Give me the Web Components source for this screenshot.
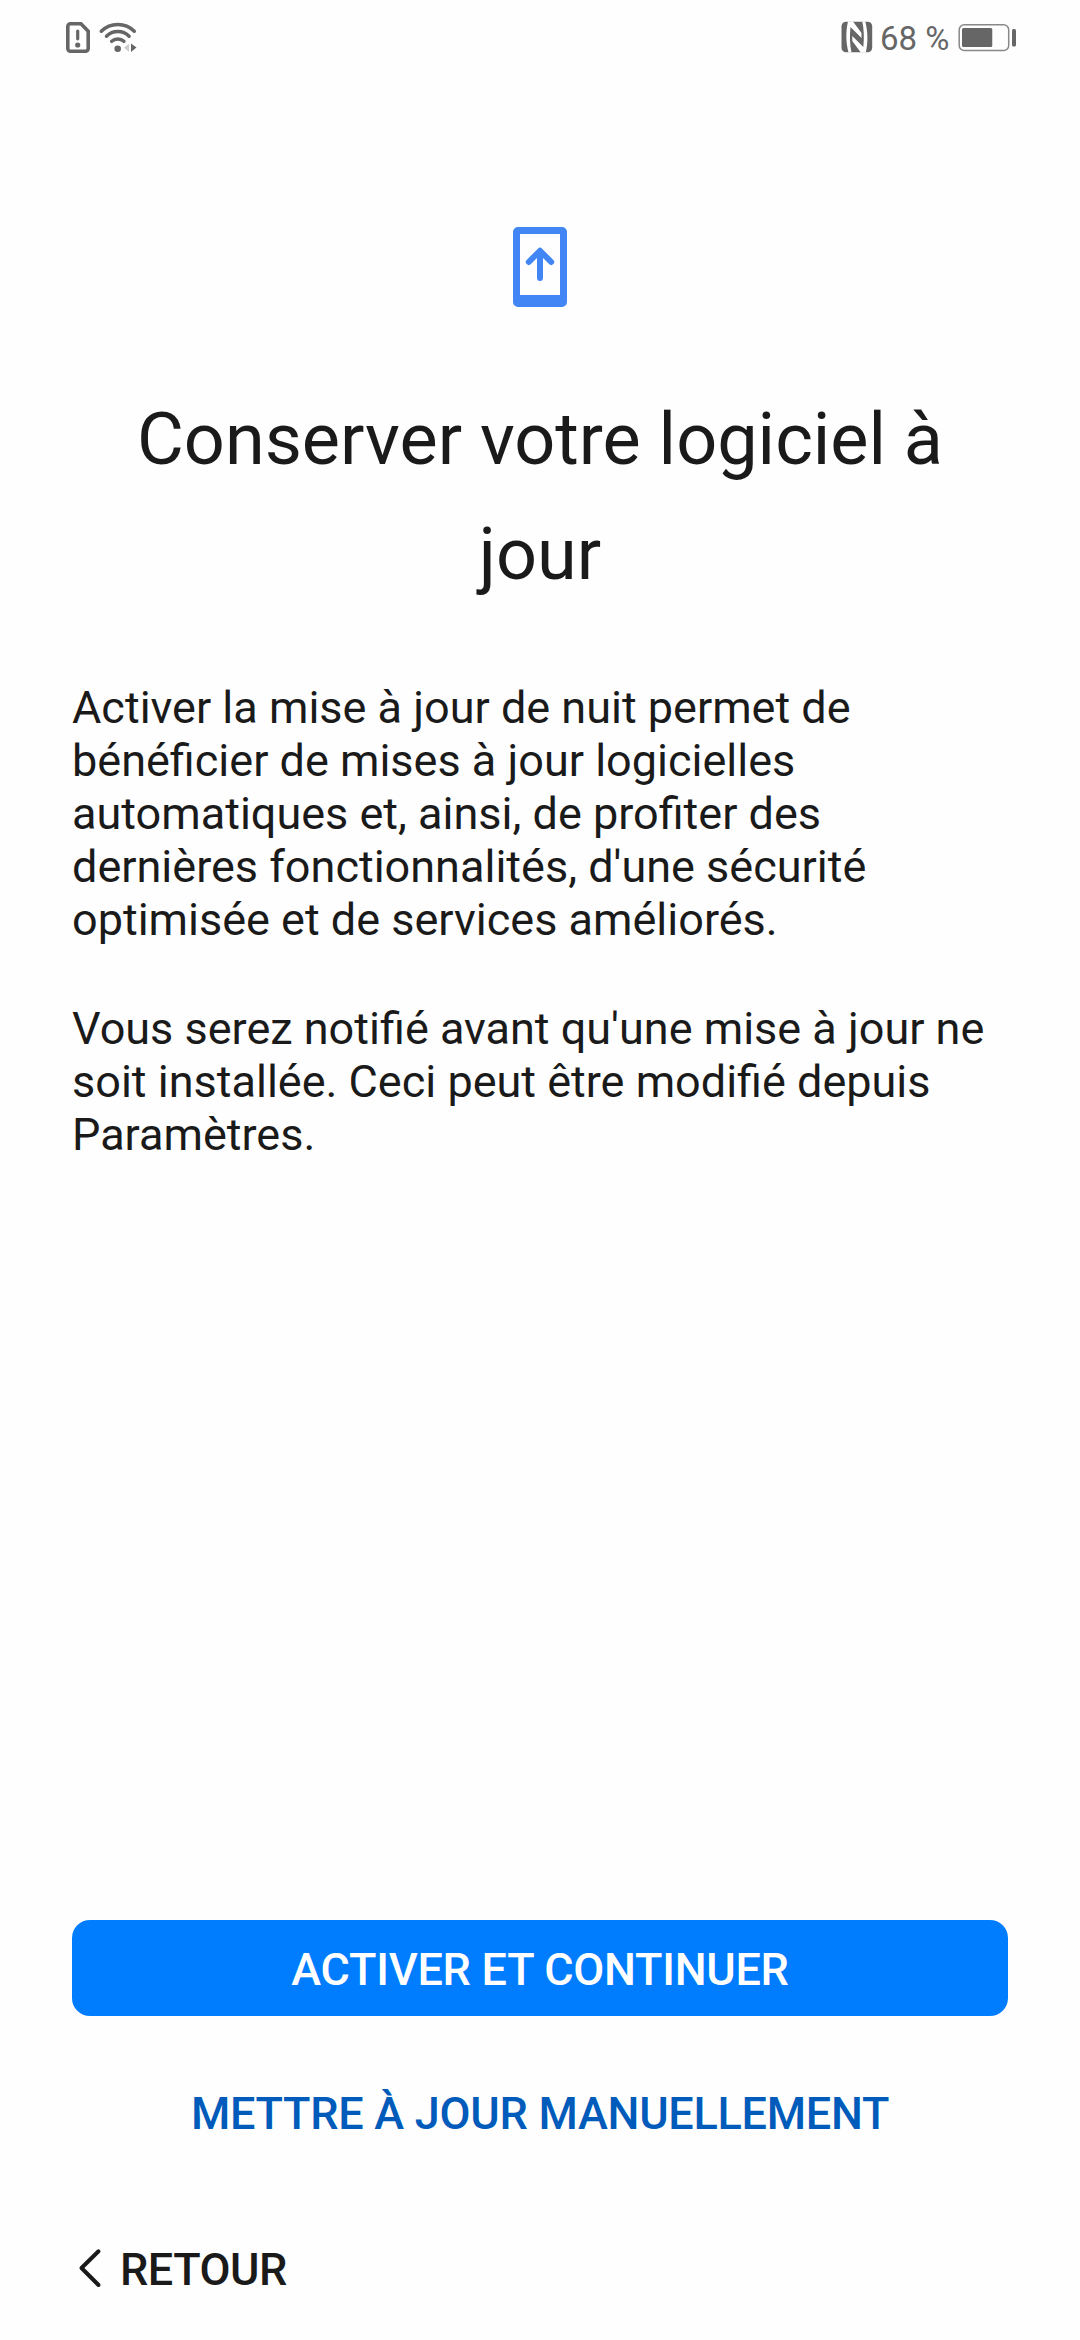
<!DOCTYPE html>
<html lang="fr">
<head>
<meta charset="utf-8">
<title>Conserver votre logiciel à jour</title>
<style>
  html, body {
    margin: 0;
    height: 100%;
    background: #fefefe;
  }
  body {
    font-family: Roboto, "Liberation Sans", sans-serif;
    color: #1a1a1a;
    overflow: hidden;
  }
</style>
</head>
<body>
<setup-screen>
  <status-bar slot="status" level="68"></status-bar>
  <update-icon slot="icon"></update-icon>
  <span slot="title">Conserver votre logiciel à jour</span>
  <text-block>Activer la mise à jour de nuit permet de bénéficier de mises à jour logicielles automatiques et, ainsi, de profiter des dernières fonctionnalités, d'une sécurité optimisée et de services améliorés.</text-block>
  <text-block>Vous serez notifié avant qu'une mise à jour ne soit installée. Ceci peut être modifié depuis Paramètres.</text-block>
  <action-button slot="actions" primary>ACTIVER ET CONTINUER</action-button>
  <action-button slot="actions">METTRE À JOUR MANUELLEMENT</action-button>
  <back-button slot="nav">RETOUR</back-button>
</setup-screen>

<script>
"use strict";

function attach(element, html) {
  const template = document.createElement("template");
  template.innerHTML = html;
  element.attachShadow({ mode: "open" });
  element.shadowRoot.appendChild(template.content.cloneNode(true));
}

class SetupScreen extends HTMLElement {
  constructor() {
    super();
    attach(this, `
      <style>
      :host {
        display: flex;
        flex-direction: column;
        box-sizing: border-box;
        width: 1080px;
        height: 2340px;
      }
      header {
        display: flex;
        justify-content: center;
        padding-top: 152px;
      }
      h1 {
        margin: 74px 72px 0;
        font-size: 72px;
        font-weight: 400;
        line-height: 115px;
        text-align: center;
      }
      main {
        display: flex;
        flex-direction: column;
        gap: 56px;
        flex: 1;
        margin: 69px 72px 0;
      }
      .actions {
        display: flex;
        flex-direction: column;
        gap: 48px;
        margin: 0 72px;
      }
      nav {
        display: flex;
        padding: 60px 72px 24px;
      }
      </style>
      <slot name="status"></slot>
      <header><slot name="icon"></slot></header>
      <h1><slot name="title"></slot></h1>
      <main><slot></slot></main>
      <div class="actions"><slot name="actions"></slot></div>
      <nav><slot name="nav"></slot></nav>`);
  }
}

class StatusBar extends HTMLElement {
  constructor() {
    super();
    attach(this, `
      <style>
      :host {
        display: flex;
        justify-content: space-between;
        height: 75px;
        color: #666;
      }
      div {
        display: flex;
        align-items: center;
      }
      .left { padding-left: 64px; }
      .right { padding-right: 62px; }
      svg { display: block; }
      .level {
        width: 78px;
        padding: 2px 0 0 6px;
        font-size: 33px;
        line-height: 39px;
        white-space: nowrap;
      }
      </style>
      <div class="left">
        <!-- SIM card alert -->
        <svg width="30" height="75" viewBox="64 0 30 75" fill="none" stroke="#666" stroke-width="3.600">
          <path d="M70.500 23.800h10.500l7.200 7.500V48.500a2.700 2.700 0 0 1-2.700 2.700H70.500a2.700 2.700 0 0 1-2.700-2.700V26.500a2.700 2.700 0 0 1 2.700-2.700z"/>
          <path d="M77.700 31.200v7.600" stroke-width="3.200" stroke-linecap="round"/>
          <circle cx="77.700" cy="45" r="2.600" fill="#666" stroke="none"/>
        </svg>
        <!-- Wi-Fi with traffic arrows -->
        <svg width="46" height="75" viewBox="94 0 46 75" fill="none" stroke="#666" stroke-width="3.500" stroke-linecap="round">
          <path d="M101.300 31.200a23.500 23.500 0 0 1 33 0M106.500 36.200a16 16 0 0 1 22.600 0M111.700 41.300a9 9 0 0 1 12.200 0"/>
          <circle cx="117.700" cy="48.700" r="3.300" fill="#666" stroke="none"/>
          <path d="M129 43.800v8l-5-4z" fill="#ccc" stroke="none"/>
          <path d="M131 43.500v8.500l5.500-4.500z" fill="#666" stroke="none"/>
        </svg>
      </div>
      <div class="right">
        <!-- NFC: two interlocking hooks -->
        <svg width="34" height="75" viewBox="840 0 34 75">
          <rect x="841.500" y="21.800" width="30.700" height="30.500" rx="4.500" fill="#666"/>
          <g fill="#fefefe">
            <path id="hook" d="M848 21.500h5L861.500 33v5L850.500 27C849.500 36 849.800 44 851.500 52.500H848.500C846 43 845.500 32 848 21.500z"/>
            <use href="#hook" transform="rotate(180 856.900 37)"/>
          </g>
        </svg>
        <span class="level"></span>
        <svg width="60" height="75" viewBox="958 0 60 75">
          <rect x="959.200" y="24.700" width="49.500" height="25.800" rx="5" fill="none" stroke="#888" stroke-width="1.500"/>
          <rect class="charge" x="962" y="28" height="19" rx="1.500" fill="#666"/>
          <rect x="1012" y="29" width="4" height="17.500" rx="1.500" fill="#666"/>
        </svg>
      </div>`);
  }
  connectedCallback() {
    const level = this.getAttribute("level");
    this.shadowRoot.querySelector(".level").textContent = `${level} %`;
    this.shadowRoot.querySelector(".charge").setAttribute("width", level * 0.445);
  }
}

class UpdateIcon extends HTMLElement {
  constructor() {
    super();
    attach(this, `
      <style>
      :host { display: block; }
      svg { display: block; }
      </style>
      <svg width="54" height="81" viewBox="0 0 54 81">
        <path fill="#4285f4" fill-rule="evenodd" d="M5 0h44a5 5 0 0 1 5 5v70a5 5 0 0 1-5 5H5a5 5 0 0 1-5-5V5a5 5 0 0 1 5-5zM7 7v61h40V7z"/>
        <path fill="none" stroke="#4285f4" stroke-width="6" stroke-linecap="round" stroke-linejoin="round" d="M27 51V24M15.800 35 27 23.800 38.200 35"/>
      </svg>`);
  }
}

class TextBlock extends HTMLElement {
  constructor() {
    super();
    attach(this, `
      <style>
      :host {
        display: block;
        font-size: 45px;
        line-height: 53px;
      }
      </style>
      <slot></slot>`);
  }
}

class ActionButton extends HTMLElement {
  constructor() {
    super();
    attach(this, `
      <style>
      :host { display: block; }
      button {
        display: block;
        width: 100%;
        height: 96px;
        padding: 2px 0 0;
        border: 0;
        border-radius: 18px;
        background: none;
        color: #005bba;
        font: 500 45px/53px Roboto, "Liberation Sans", sans-serif;
        letter-spacing: -0.27px;
      }
      :host([primary]) button {
        background: #007dff;
        color: #fff;
      }
      </style>
      <button><slot></slot></button>`);
  }
}

class BackButton extends HTMLElement {
  constructor() {
    super();
    attach(this, `
      <style>
      :host {
        display: flex;
        align-items: center;
        height: 96px;
        font-size: 45px;
        font-weight: 500;
        line-height: 53px;
        letter-spacing: -0.5px;
      }
      svg { display: block; }
      span { padding: 2px 0 0 12px; }
      </style>
      <svg width="36" height="48" viewBox="0 0 36 48">
        <path d="M26.500 7.300 9.500 24l17 17" fill="none" stroke="#1a1a1a" stroke-width="4" stroke-linecap="round" stroke-linejoin="round"/>
      </svg>
      <span><slot></slot></span>`);
  }
}

customElements.define("setup-screen", SetupScreen);
customElements.define("status-bar", StatusBar);
customElements.define("update-icon", UpdateIcon);
customElements.define("text-block", TextBlock);
customElements.define("action-button", ActionButton);
customElements.define("back-button", BackButton);
</script>
</body>
</html>
